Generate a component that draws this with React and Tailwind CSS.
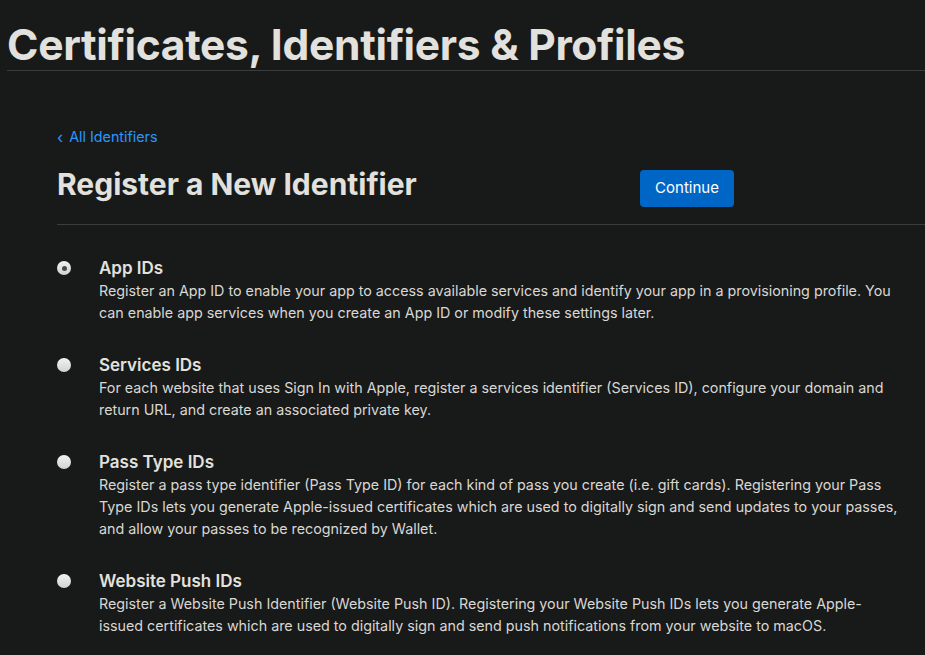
import React, { useState } from 'react';

const items = [
  {
    id: 'app',
    title: 'App IDs',
    text: 'Register an App ID to enable your app to access available services and identify your app in a provisioning profile. You can enable app services when you create an App ID or modify these settings later.',
  },
  {
    id: 'services',
    title: 'Services IDs',
    text: 'For each website that uses Sign In with Apple, register a services identifier (Services ID), configure your domain and return URL, and create an associated private key.',
  },
  {
    id: 'pass',
    title: 'Pass Type IDs',
    text: 'Register a pass type identifier (Pass Type ID) for each kind of pass you create (i.e. gift cards). Registering your Pass Type IDs lets you generate Apple-issued certificates which are used to digitally sign and send updates to your passes, and allow your passes to be recognized by Wallet.',
  },
  {
    id: 'push',
    title: 'Website Push IDs',
    text: 'Register a Website Push Identifier (Website Push ID). Registering your Website Push IDs lets you generate Apple-issued certificates which are used to digitally sign and send push notifications from your website to macOS.',
  },
];

const Radio = ({ checked, onClick }) => (
  <button
    onClick={onClick}
    className="mt-[5px] w-[14px] h-[14px] rounded-full bg-gradient-to-b from-[#f2f2f2] to-[#d2d2d2] flex items-center justify-center shrink-0"
  >
    {checked && <span className="w-[5px] h-[5px] rounded-full bg-[#4a4a4a]" />}
  </button>
);

const App = () => {
  const [selected, setSelected] = useState('app');

  return (
    <div className="min-h-screen bg-[#181a1a] text-[#e3e1dd] font-['Inter',sans-serif] overflow-hidden">
      <header className="pl-[7px] pt-[21px]">
        <h1 className="text-[42.5px] leading-[48px] font-bold tracking-[-0.3px] pb-[1px] border-b border-[#3b3c3c] whitespace-nowrap">
          Certificates, Identifiers &amp; Profiles
        </h1>
      </header>

      <main className="pl-[57px] pt-[56px]">
        <a href="#" className="text-[14.3px] leading-[20px] text-[#2997ff] flex items-center gap-[6px]">
          <span className="text-[16px]">‹</span>
          All Identifiers
        </a>

        <div className="flex items-start border-b border-[#3b3c3c] pt-[19px] pb-[17px] w-[868px]">
          <h2 className="w-[583px] text-[30px] leading-[36px] font-bold">Register a New Identifier</h2>
          <button className="mt-[4px] w-[94px] h-[37px] rounded-[4px] bg-[#0066c5] text-white text-[15px] font-['Inter',sans-serif]">
            Continue
          </button>
        </div>

        <ul className="pt-[31px] flex flex-col gap-[29px] w-[844px]">
          {items.map((item) => (
            <li key={item.id} className="flex gap-[28px]">
              <Radio checked={selected === item.id} onClick={() => setSelected(item.id)} />
              <div>
                <div className="text-[17px] leading-[24px] font-semibold">{item.title}</div>
                <p className="text-[14.3px] leading-[22px] text-[#d9d7d3]">{item.text}</p>
              </div>
            </li>
          ))}
        </ul>
      </main>
    </div>
  );
};

export default App;
